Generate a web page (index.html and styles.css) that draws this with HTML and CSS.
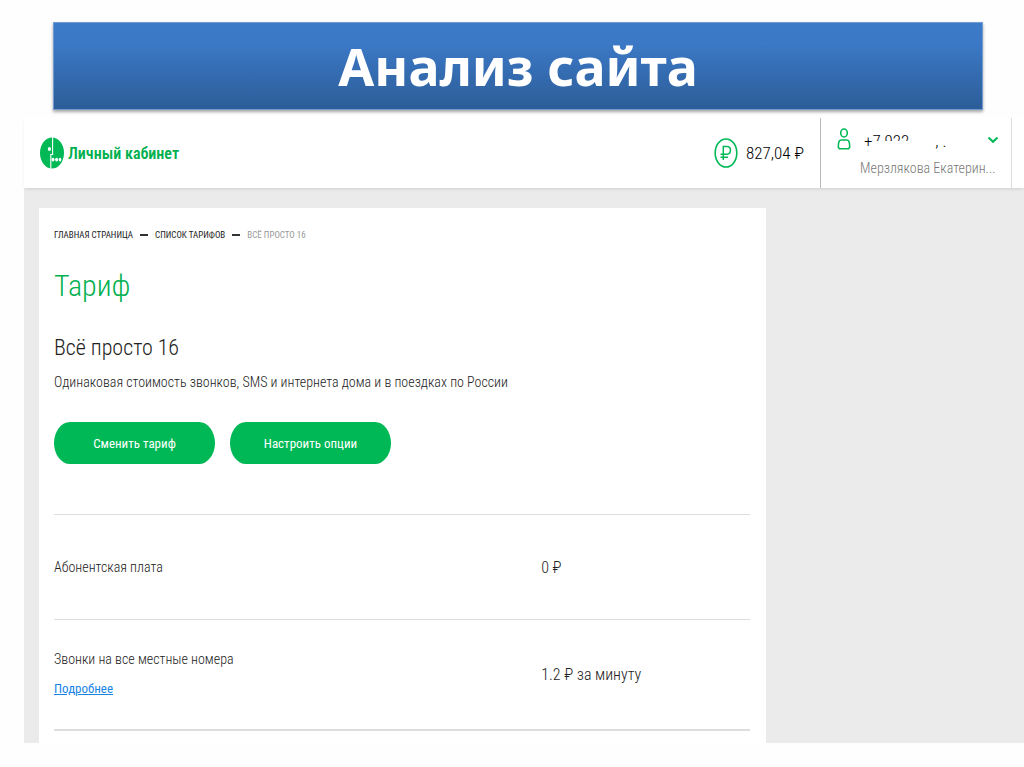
FILE: index.html
```html
<!DOCTYPE html>
<html lang="ru">
<head>
  <meta charset="UTF-8" />
  <title>Анализ сайта</title>
  <meta name="viewport" content="width=device-width, initial-scale=1.0" />
  <link rel="stylesheet" href="styles.css">
</head>
<body>

  <h1 class="slide-title">Анализ сайта</h1>

  <div class="site">
    <header class="header">
      <a class="logo" href="#">
        <svg width="24" height="32" viewBox="0 0 24 32" aria-hidden="true">
          <ellipse cx="12" cy="16" rx="12" ry="15.5" fill="#00b956" />
          <path d="M12.6 0V17.5H10.8V32" fill="none" stroke="#fff" stroke-width="1.1" />
          <g fill="#fff">
            <ellipse cx="9.4" cy="12" rx="1.6" ry="2" />
            <ellipse cx="13" cy="22.6" rx="1.5" ry="1.9" />
            <ellipse cx="16.6" cy="22.6" rx="1.5" ry="1.9" />
            <ellipse cx="20" cy="22.6" rx="1.3" ry="1.9" />
          </g>
        </svg>
        <span>Личный кабинет</span>
      </a>

      <a class="balance" href="#">
        <svg width="24" height="32" viewBox="0 0 24 32" fill="none" stroke="#00b956" aria-hidden="true">
          <ellipse cx="12" cy="16" rx="10.8" ry="14" stroke-width="1.6" />
          <path d="M9.3 23V9.5H13C17.6 9.5 17.6 17.2 13 17.2H6.5M6.5 20.2H14" stroke-width="1.5" />
        </svg>
        <span>827,04 ₽</span>
      </a>

      <button class="user" type="button">
        <svg class="user-icon" width="14" height="22" viewBox="0 0 14 22" fill="none" stroke="#00b956" stroke-width="1.6" aria-hidden="true">
          <ellipse cx="7" cy="5" rx="3.3" ry="4" />
          <path d="M4.2 12H9.8C12 12 12.7 16 12.7 18.5C12.7 20.4 11.5 20.8 10.3 20.8H3.7C2.5 20.8 1.3 20.4 1.3 18.5C1.3 16 2 12 4.2 12Z" />
        </svg>
        <span class="phone">+<span class="top">7 922</span><span class="bottom">, .</span></span>
        <svg class="arrow" width="12" height="8" viewBox="0 0 12 8" fill="none" stroke="#00b956" stroke-width="2" aria-hidden="true">
          <path d="M1.5 1.5L6 5.8L10.5 1.5" />
        </svg>
        <span class="name">Мерзлякова Екатерин...</span>
      </button>
    </header>

    <main class="card">
      <nav class="crumbs">
        <a href="#">Главная страница</a>
        <i></i>
        <a href="#">Список тарифов</a>
        <i></i>
        <span>Всё просто 16</span>
      </nav>

      <h2>Тариф</h2>
      <h3>Всё просто 16</h3>
      <p>Одинаковая стоимость звонков, SMS и интернета дома и в поездках по России</p>

      <div class="actions">
        <button class="btn" type="button">Сменить тариф</button>
        <button class="btn" type="button">Настроить опции</button>
      </div>

      <table class="prices">
        <tr>
          <th scope="row">Абонентская плата</th>
          <td>0 ₽</td>
        </tr>
        <tr>
          <th scope="row">Звонки на все местные номера <a href="#">Подробнее</a></th>
          <td>1.2 ₽ за минуту</td>
        </tr>
      </table>
    </main>
  </div>

</body>
</html>
```
FILE: styles.css
```css
* {
  box-sizing: border-box;
}
body {
  margin: 0;
  padding: 22px 0 24px;
  background: #fefefe;
  color: #222;
  font-family: "Roboto Condensed", Roboto, sans-serif;
}
a {
  color: inherit;
  text-decoration: none;
}
.slide-title {
  margin: 0 41px 8px 53px;
  height: 88px;
  line-height: 86px;
  text-align: center;
  font-family: "Noto Sans", "Open Sans", sans-serif;
  font-size: 52px;
  font-weight: bold;
  color: #fff;
  background: linear-gradient(#3c7bc9, #3b78c5 25%, #2c5d98);
  border: 1px solid #6f9bd0;
  box-shadow: 0 2px 3px rgba(0, 0, 0, 0.35);
}
.site {
  margin-left: 24px;
  background: #ebebeb;
}
.header {
  display: flex;
  align-items: center;
  height: 70px;
  padding: 0 12px 0 16px;
  background: #fff;
  box-shadow: 0 2px 3px -1px rgba(0, 0, 0, 0.12);
}
.logo {
  display: flex;
  align-items: center;
  gap: 4px;
  margin-right: auto;
  font-size: 16px;
  font-weight: 600;
  color: #00b04f;
}
.balance {
  display: flex;
  align-items: center;
  gap: 8px;
  margin-right: 16px;
  font-size: 17px;
  font-weight: 300;
  color: #000;
}
.user {
  display: grid;
  grid-template-columns: 19px 1fr 14px;
  align-content: start;
  column-gap: 4px;
  width: 192px;
  height: 70px;
  padding: 10px 10px 0 16px;
  border: 0;
  border-left: 1px solid #bbb;
  border-right: 1px solid #ddd;
  background: none;
  font: inherit;
  text-align: left;
  cursor: pointer;
}
.phone {
  display: flex;
  height: 28px;
  padding-left: 4px;
  line-height: 26px;
  font-size: 17px;
  font-weight: 300;
  color: #000;
}
/* only parts of the number stay visible */
.top {
  height: 13px;
  overflow: hidden;
}
.bottom {
  margin-left: 26px;
}
.arrow {
  margin-top: 8px;
}
.name {
  grid-column: 2 / 4;
  white-space: nowrap;
  font-size: 14px;
  line-height: 24px;
  font-weight: 300;
  color: #777;
}
.card {
  width: calc(72% + 7px);
  margin: 20px 0 0 15px;
  padding: 19px 16px 12px 15px;
  background: #fff;
}
.crumbs {
  display: flex;
  align-items: center;
  gap: 7px;
  height: 16px;
  font-size: 9px;
  text-transform: uppercase;
}
.crumbs i {
  width: 8px;
  height: 2px;
  background: #333;
}
.crumbs span {
  color: #999;
}
h2 {
  margin: 21px 0 24px;
  font-size: 30px;
  line-height: 44px;
  font-weight: 300;
  color: #00b04f;
}
h3 {
  margin: 0;
  font-size: 22px;
  line-height: 32px;
  font-weight: 300;
}
p {
  margin: 8px 0 30px;
  font-size: 14px;
  line-height: 20px;
  font-weight: 300;
}
.actions {
  display: flex;
  gap: 15px;
  margin-bottom: 50px;
}
.btn {
  width: 161px;
  height: 42px;
  border: 0;
  border-radius: 16px / 21px;
  background: #00b956;
  color: #fff;
  font: inherit;
  font-size: 13px;
  cursor: pointer;
}
.prices {
  width: 100%;
  border-collapse: collapse;
  border-bottom: 2px solid #ddd;
}
.prices tr {
  height: 105px;
  border-top: 1px solid #ddd;
}
.prices tr:last-child {
  height: 110px;
}
.prices th {
  width: 70%;
  padding: 0;
  text-align: left;
  font-size: 14px;
  line-height: 20px;
  font-weight: 300;
}
.prices td {
  padding: 0;
  font-size: 16px;
  font-weight: 300;
}
.prices a {
  display: block;
  margin-top: 10px;
  font-size: 13px;
  font-weight: normal;
  color: #1a84e5;
  text-decoration: underline;
}
```
